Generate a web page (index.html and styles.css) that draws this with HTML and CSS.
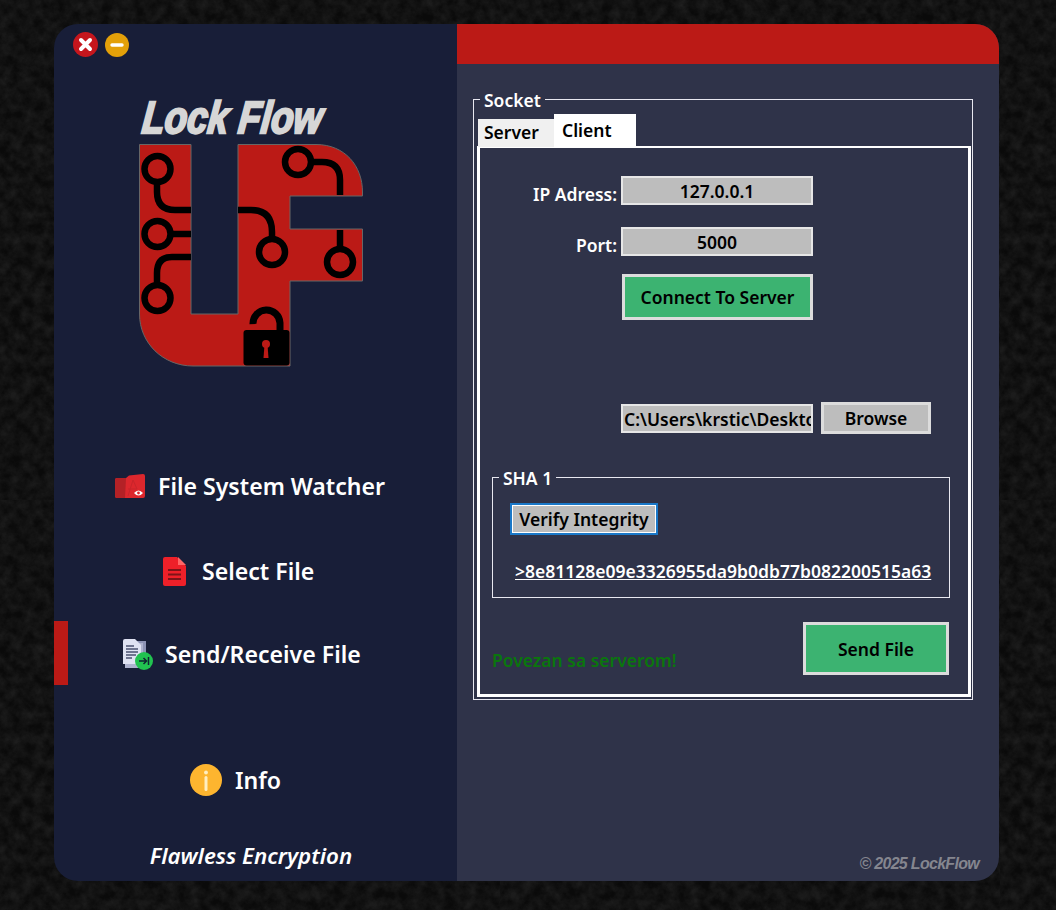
FILE: index.html
```html
<!DOCTYPE html>
<html lang="en">
<head>
<meta charset="utf-8">
<title>Lock Flow</title>
<link rel="stylesheet" href="styles.css">
</head>
<body>
<main class="window">
  <aside class="sidebar">
    <div class="window-controls">
      <svg class="control control-close" viewBox="0 0 25 25"><circle cx="12.5" cy="12.5" r="12.5" fill="#c5161d"/><path d="M8 8l9 9M17 8l-9 9" stroke="#fff" stroke-width="4" stroke-linecap="round"/></svg>
      <svg class="control control-min" viewBox="0 0 24 24"><circle cx="12" cy="12" r="12" fill="#e3a009"/><path d="M7 12h10" stroke="#fff" stroke-width="3.4" stroke-linecap="round"/></svg>
    </div>
    <svg class="logo" viewBox="139 95 226 272">
      <text class="logo-title" x="155" y="133" transform="skewX(-6)" textLength="180" lengthAdjust="spacingAndGlyphs">Lock Flow</text>
      <path d="M139.5 144.5H191V314H238V144.5H316C345 144.5 362.500 166 362.500 192V196H290V229H362.500V281H290V366H193C163 366 139.500 343 139.500 314Z" fill="#bb1a16" stroke="#666" stroke-width="1"/>
      <g fill="none" stroke="#000" stroke-width="6.500">
        <path d="M157 185V192Q157 210 175 210H191"/>
        <path d="M172 234H191"/>
        <path d="M157 282V273Q157 257 172 257H191"/>
        <path d="M313 162H322Q340 162 340 180V195"/>
        <path d="M238 210H251Q272 210 272 232V238"/>
        <path d="M340 230V248"/>
        <circle cx="157.500" cy="169" r="13"/>
        <circle cx="157.500" cy="234" r="13"/>
        <circle cx="157.500" cy="298" r="13"/>
        <circle cx="298" cy="162" r="13"/>
        <circle cx="272" cy="252" r="13"/>
        <circle cx="340" cy="262" r="13"/>
        <path d="M253 324A13.500 13.500 0 0 1 280 323V332" stroke-width="7"/>
      </g>
      <rect x="243.500" y="330" width="46" height="35.500" rx="3"/>
      <circle cx="266" cy="344" r="4" fill="#bb1a16"/>
      <path d="M264.500 345H267.500L268.500 358H263.500Z" fill="#bb1a16"/>
    </svg>

    <nav class="nav">
      <a class="nav-item nav-watcher">
        <svg class="nav-icon" width="30" height="24" viewBox="0 0 30 24">
          <path d="M0 6Q0 4 2 4H11L14 1.500L28 0Q30 0 30 2V22Q30 24 28 24H2Q0 24 0 22Z" fill="#dc272d"/>
          <path d="M0 6Q0 4 2 4H11L10 24H2Q0 24 0 22Z" fill="#b32126"/>
          <path d="M13 22L18 6L22 15H13" fill="none" stroke="#c8242a"/>
          <path d="M19 19Q23.500 14 28 19Q23.500 24 19 19Z" fill="#fff"/>
          <circle cx="23.500" cy="19" r="1.400" fill="#dc272d"/>
        </svg>
        <span>File System Watcher</span>
      </a>
      <a class="nav-item nav-select">
        <svg class="nav-icon" width="23" height="29" viewBox="0 0 23 29">
          <path d="M2 0H14L23 9V27Q23 29 21 29H2Q0 29 0 27V2Q0 0 2 0Z" fill="#ee2029"/>
          <path d="M15 0L23 8H15Z" fill="#f66"/>
          <path d="M5 13H18M5 17.500H18M5 22H18" stroke="#7d1418" stroke-width="2.200"/>
        </svg>
        <span>Select File</span>
      </a>
      <a class="nav-item nav-send is-active">
        <svg class="nav-icon" width="31" height="31" viewBox="0 0 31 31">
          <rect x="6" y="2" width="18" height="25" fill="#8d93b5"/>
          <rect x="3" y="4" width="18" height="25" fill="#aeb3cf"/>
          <path d="M1 2Q1 0 3 0H13L19 6V25H1Z" fill="#dfe2f2"/>
          <path d="M4 7H12M4 10H16M4 13H16M4 16H14M4 19H10" stroke="#4b5170" stroke-width="1.300"/>
          <circle cx="22" cy="22" r="9" fill="#21c250"/>
          <path d="M17 22H24M21.500 19L24.500 22L21.500 25M26.500 18V26" fill="none" stroke="#123" stroke-width="1.500"/>
        </svg>
        <span>Send/Receive File</span>
      </a>
      <a class="nav-item nav-info">
        <svg class="nav-icon" width="32" height="32" viewBox="0 0 32 32">
          <circle cx="16" cy="16" r="16" fill="#fdb52f"/>
          <circle cx="16" cy="8.500" r="1.900" fill="#ffeec0"/>
          <rect x="14.500" y="12" width="3" height="15" rx="1.500" fill="#ffeec0"/>
        </svg>
        <span>Info</span>
      </a>
    </nav>
    <p class="tagline">Flawless Encryption</p>
  </aside>

  <section class="content">
    <header class="titlebar"></header>
    <div class="content-body">
      <fieldset class="group group-socket">
        <legend>Socket</legend>
        <div class="tabs">
          <button class="tab">Server</button>
          <button class="tab tab-active">Client</button>
        </div>
        <div class="tab-panel">
          <div class="row row-ip">
            <label class="row-label">IP Adress:</label>
            <div class="input">127.0.0.1</div>
          </div>
          <div class="row row-port">
            <label class="row-label">Port:</label>
            <div class="input">5000</div>
          </div>
          <button class="btn btn-green btn-connect">Connect To Server</button>
          <div class="row row-path">
            <div class="input input-path">C:\Users\krstic\Desktop</div>
            <button class="btn btn-grey btn-browse">Browse</button>
          </div>
          <fieldset class="group group-sha">
            <legend>SHA 1</legend>
            <button class="btn-verify">Verify Integrity</button>
            <p class="hash">&gt;8e81128e09e3326955da9b0db77b082200515a63</p>
          </fieldset>
          <div class="panel-footer">
            <span class="status">Povezan sa serverom!</span>
            <button class="btn btn-green btn-send">Send File</button>
          </div>
        </div>
      </fieldset>
      <p class="copyright">© 2025 LockFlow</p>
    </div>
  </section>
</main>
</body>
</html>
```
FILE: styles.css
```css
* { box-sizing: border-box; }
html, body { height: 100%; }
body {
  margin: 0;
  padding: 24px 57px 29px 54px;
  font-family: "Noto Sans", "Open Sans", sans-serif;
  font-weight: 600;
  color: #fff;
  background-color: #0a0a0a;
  background-image: url("data:image/svg+xml,%3Csvg xmlns='http://www.w3.org/2000/svg' width='500' height='500'%3E%3Cfilter id='n'%3E%3CfeTurbulence type='fractalNoise' baseFrequency='.09' numOctaves='5' seed='7'/%3E%3CfeColorMatrix values='0 0 0 0 .03 0 0 0 0 .03 0 0 0 0 .03 .8 0 0 0 -.2'/%3E%3C/filter%3E%3Crect width='500' height='500' filter='url(%23n)'/%3E%3C/svg%3E");
}
.window {
  display: flex;
  height: 857px;
  border-radius: 24px;
  overflow: hidden;
}

/* sidebar */
.sidebar {
  position: relative;
  flex: 0 0 403px;
  display: flex;
  flex-direction: column;
  background: #181e38;
}
.window-controls {
  display: flex;
  align-items: center;
  gap: 7px;
  padding: 8px 0 0 19px;
}
.control-close { width: 25px; height: 25px; }
.control-min { width: 24px; height: 24px; }
.logo {
  display: block;
  width: 226px;
  height: 272px;
  margin: 38px 0 0 85px;
}
.logo-title {
  font-family: "Liberation Sans", sans-serif;
  font-size: 45px;
  font-weight: 700;
  font-style: italic;
  fill: #d6d6d6;
  stroke: #d6d6d6;
  stroke-width: 2.400;
}
.nav {
  display: flex;
  flex-direction: column;
  margin-top: 103px;
}
.nav-item {
  display: flex;
  align-items: center;
  font-size: 23.100px;
  line-height: 32px;
  color: #fff;
}
.nav-watcher { margin-left: 61px; gap: 13px; }
.nav-select { margin: 53px 0 0 109px; gap: 16px; }
.nav-send { margin: 51px 0 0 68px; gap: 12px; }
.nav-info { margin: 94px 0 0 136px; gap: 13px; }
.is-active::before {
  content: "";
  position: absolute;
  left: 0;
  top: 597px;
  width: 14px;
  height: 64px;
  background: #bb1a16;
}
.tagline {
  margin: 46px 0 0;
  text-align: center;
  font-size: 22.300px;
  line-height: 28px;
  font-style: italic;
  padding-right: 9px;
}

/* content */
.content {
  flex: 1;
  display: flex;
  flex-direction: column;
  background: #2f3349;
}
.titlebar {
  flex: 0 0 40px;
  background: #bb1a16;
}
.content-body {
  flex: 1;
  display: flex;
  flex-direction: column;
  padding: 23px 26px 0 16px;
}
.group {
  margin: 0;
  padding: 0;
  border: 1px solid #e8e8f0;
  min-width: 0;
}
.group legend {
  margin-left: 2px;
  padding: 2px 4px 0;
  font-size: 17.500px;
  line-height: 23px;
}
.group-socket {
  height: 613px;
  padding: 0 1px 2px 4px;
}
.tabs {
  display: flex;
  align-items: flex-end;
  height: 35px;
}
.tab {
  width: 76px;
  height: 28px;
  padding: 0 0 2px 6px;
  border: 0;
  background: #f0f0f0;
  color: #000;
  font: 600 17.500px/26px "Noto Sans", sans-serif;
  text-align: left;
}
.tab-active {
  width: 82px;
  height: 33px;
  padding: 0 0 1px 8px;
  background: #fff;
}
.tab-panel {
  display: flex;
  flex-direction: column;
  align-items: flex-start;
  height: 551px;
  margin: -1px 0 0 -1px;
  padding: 28px 0 0 1px;
  border: 3px solid #fff;
  border-top-width: 2px;
}
.row {
  display: flex;
  align-items: flex-start;
}
.row-label {
  flex: 0 0 136px;
  text-align: right;
  font-size: 17.500px;
  line-height: 29px;
  padding-top: 4px;
}
.input {
  width: 192px;
  height: 29px;
  margin-left: 4px;
  border: 2px solid #e6e6e6;
  background: #bdbdbd;
  color: #000;
  font-size: 17.500px;
  line-height: 27px;
  text-align: center;
  overflow: hidden;
  white-space: nowrap;
}
.row-port { margin-top: 18px; }
.btn {
  border: 3px solid #dcdcdc;
  color: #000;
  font: 600 17.500px/24px "Noto Sans", sans-serif;
  padding: 0;
}
.btn-green { background: #3cb371; }
.btn-grey { background: #bdbdbd; }
.btn-connect {
  width: 191px;
  height: 46px;
  margin: 14px 0 0 141px;
}
.row-path { margin: 82px 0 0 136px; gap: 8px; align-items: center; }
.input-path {
  padding: 0 1px;
  text-align: left;
}
.btn-browse { width: 110px; height: 32px; }
.group-sha {
  position: relative;
  width: 458px;
  height: 133px;
  margin: 31px 0 0 11px;
  padding: 0 0 0 17px;
}
.group-sha legend { margin-left: -11px; }
.btn-verify {
  display: block;
  width: 148px;
  height: 32px;
  padding: 0;
  margin-top: 13px;
  border: 2px solid #1a78c8;
  outline: 1px solid #fff;
  outline-offset: -3px;
  background: #bdbdbd;
  color: #000;
  font: 600 17.500px/24px "Noto Sans", sans-serif;
}
.hash {
  margin: 25px 0 0 5px;
  font-size: 17.500px;
  line-height: 23px;
  text-decoration: underline;
  white-space: nowrap;
}
.panel-footer {
  display: flex;
  align-items: flex-end;
  justify-content: space-between;
  width: 457px;
  margin: 24px 0 0 11px;
}
.status {
  color: #0a760d;
  font-size: 17.500px;
  line-height: 23px;
  padding-bottom: 3px;
}
.btn-send { width: 146px; height: 53px; }
.copyright {
  margin: 154px -6px 0 0;
  padding: 0;
  align-self: flex-end;
  font: italic 700 16px/20px "Liberation Sans", sans-serif;
  letter-spacing: -.7px;
  color: #85868f;
}
```
